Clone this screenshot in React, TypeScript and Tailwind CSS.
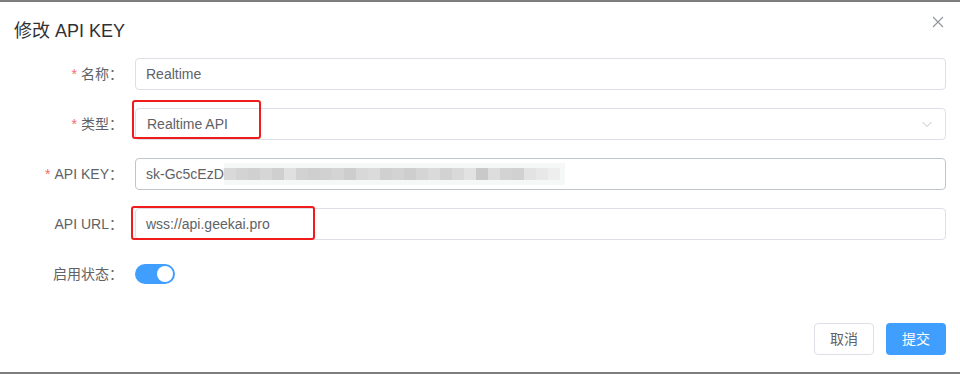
import { useState } from "react";

const blur = [
  "bg-[#d9d9d9]", "bg-[#d3d3d3]", "bg-[#d0d0d0]", "bg-[#d6d6d6]", "bg-[#cfcfcf]", "bg-[#e0e0e0]",
  "bg-[#d2d2d2]", "bg-[#cfcfcf]", "bg-[#d1d1d1]", "bg-[#d4d4d4]", "bg-[#cdcdcd]", "bg-[#d8d8d8]",
  "bg-[#dbdbdb]", "bg-[#d0d0d0]", "bg-[#d3d3d3]", "bg-[#cecece]", "bg-[#d5d5d5]", "bg-[#dadada]",
  "bg-[#d2d2d2]", "bg-[#d9d9d9]", "bg-[#e2e2e2]", "bg-[#c9c9c9]", "bg-[#dddddd]", "bg-[#d3d3d3]",
  "bg-[#d1d1d1]", "bg-[#e3e3e3]", "bg-[#e8e8e8]", "bg-[#eeeeee]",
];

const Label = ({ text, required }: { text: string; required?: boolean }) => (
  <div className="w-[120px] shrink-0 pr-[12px] text-right text-[14px] text-[#606266]">
    {required && <span className="mr-[4px] text-[#f56c6c]">*</span>}
    {text}
  </div>
);

export default function App() {
  const [enabled, setEnabled] = useState(true);

  return (
    <div
      className="w-[960px] h-[374px] bg-white border-t-2 border-b-2 border-[#7d7d7d] flex flex-col"
      style={{ fontFamily: '"Liberation Sans", "Noto Sans CJK SC", sans-serif' }}
    >
      {/* header */}
      <div className="flex items-center justify-between pl-[14px] pr-[16px] pt-[17px] h-[54px] shrink-0 items-start">
        <span className="text-[18px] leading-[24px] text-[#303133]">修改 API KEY</span>
        <button className="mt-[-3px] text-[#909399]">
          <svg width="12" height="12" viewBox="0 0 12 12" fill="none" stroke="currentColor" strokeWidth="1.1">
            <path d="M1 1 L11 11 M11 1 L1 11" />
          </svg>
        </button>
      </div>

      {/* form */}
      <div className="flex flex-col gap-[18px] pl-[15px] pr-[14px] pt-[2px]">
        <div className="flex items-center h-[32px]">
          <Label text="名称：" required />
          <div className="flex-1 h-[32px] border border-[#dcdfe6] rounded-[4px] pl-[10px] flex items-center text-[14px] text-[#606266]">
            Realtime
          </div>
        </div>

        <div className="flex items-center h-[32px]">
          <Label text="类型：" required />
          <div className="relative flex-1 h-[32px] border border-[#dcdfe6] rounded-[4px] pl-[11px] pr-[12px] flex items-center justify-between text-[14px] text-[#606266]">
            <span>Realtime API</span>
            <svg width="12" height="12" viewBox="0 0 12 12" fill="none" stroke="#c0c4cc" strokeWidth="1">
              <path d="M1.5 4 L6 8.5 L10.5 4" />
            </svg>
            <div className="absolute left-[-4px] top-[-9px] w-[129px] h-[39px] border-2 border-[#f01c1c] rounded-[3px]" />
          </div>
        </div>

        <div className="flex items-center h-[32px]">
          <Label text="API KEY：" required />
          <div className="flex-1 h-[32px] border border-[#c0c4cc] rounded-[4px] pl-[10px] flex items-center text-[14px] text-[#606266]">
            <span>sk-Gc5cEzD</span>
            <div className="flex items-center h-[22px] pr-[5px] bg-[#f6f7f7]">
              {blur.map((c, i) => (
                <div key={i} className={`w-[12px] h-[12px] ${c}`} />
              ))}
            </div>
          </div>
        </div>

        <div className="flex items-center h-[32px]">
          <Label text="API URL：" />
          <div className="relative flex-1 h-[32px] border border-[#dcdfe6] rounded-[4px] pl-[10px] flex items-center text-[14px] text-[#606266]">
            wss://api.geekai.pro
            <div className="absolute left-[-5px] top-[-3px] w-[184px] h-[34px] border-2 border-[#f01c1c] rounded-[3px]" />
          </div>
        </div>

        <div className="flex items-center h-[32px]">
          <Label text="启用状态：" />
          <button
            onClick={() => setEnabled(!enabled)}
            className={`w-[40px] h-[20px] rounded-full flex items-center px-[2px] ${enabled ? "bg-[#409eff] justify-end" : "bg-[#dcdfe6] justify-start"}`}
          >
            <span className="w-[16px] h-[16px] rounded-full bg-white" />
          </button>
        </div>
      </div>

      {/* footer */}
      <div className="mt-auto mb-[17px] flex justify-end gap-[12px] pr-[14px]">
        <button className="w-[60px] h-[32px] border border-[#dcdfe6] rounded-[4px] text-[14px] text-[#606266] bg-white">
          取消
        </button>
        <button className="w-[60px] h-[32px] rounded-[4px] text-[14px] text-white bg-[#409eff]">
          提交
        </button>
      </div>
    </div>
  );
}
